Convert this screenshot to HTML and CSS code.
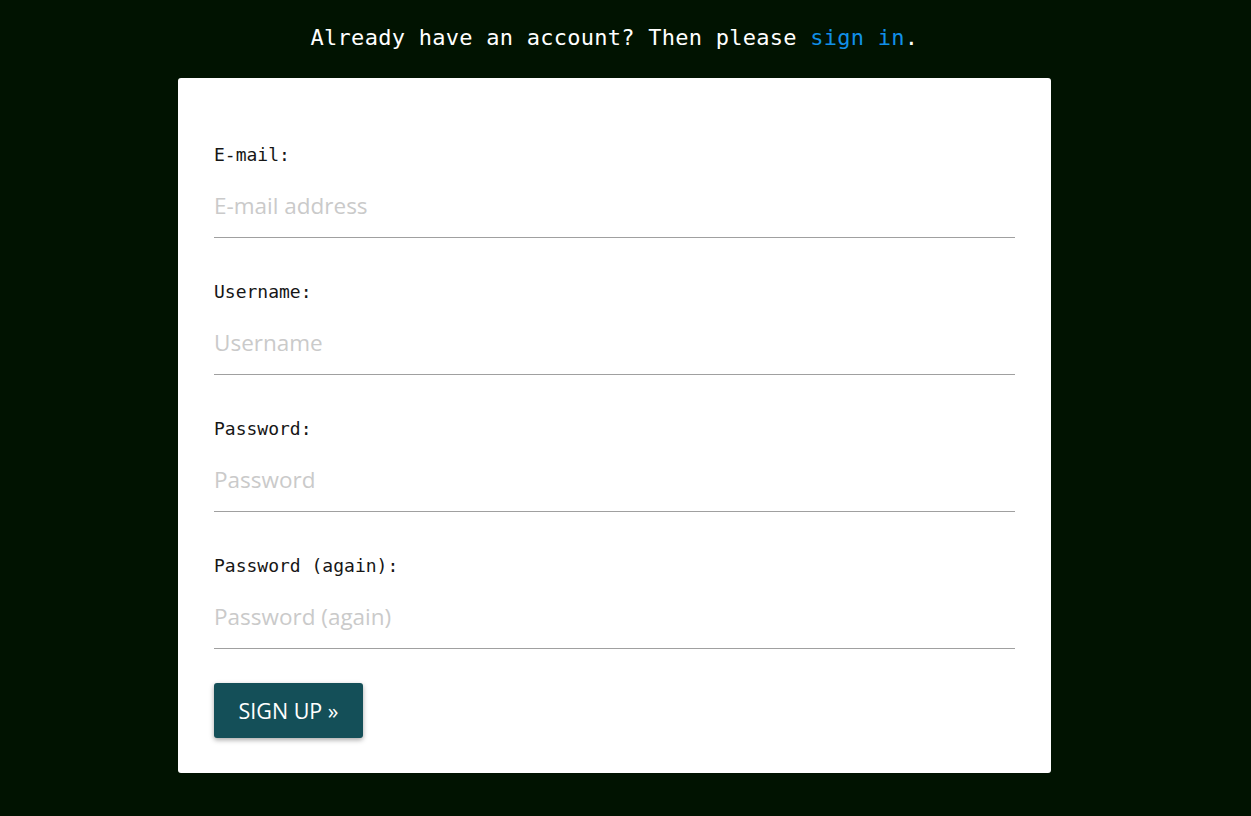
FILE: index.html
```html
<!DOCTYPE html>
<html lang="en">
<head>
<meta charset="utf-8">
<title>Sign up</title>
<link rel="stylesheet" href="styles.css">
</head>
<body>
<div class="page">
  <p class="intro">Already have an account? Then please <a href="#" class="link">sign in</a>.</p>
  <form class="card">
    <div class="field">
      <label class="label" for="email">E-mail:</label>
      <input class="input" id="email" type="email" placeholder="E-mail address">
    </div>
    <div class="field">
      <label class="label" for="username">Username:</label>
      <input class="input" id="username" type="text" placeholder="Username">
    </div>
    <div class="field">
      <label class="label" for="pw1">Password:</label>
      <input class="input" id="pw1" type="password" placeholder="Password">
    </div>
    <div class="field">
      <label class="label" for="pw2">Password (again):</label>
      <input class="input" id="pw2" type="password" placeholder="Password (again)">
    </div>
    <button class="button" type="submit">SIGN UP &raquo;</button>
  </form>
</div>
</body>
</html>
```

FILE: styles.css
```css
html, body {
  margin: 0;
  padding: 0;
  background: #011301;
  height: 100%;
}
body {
  font-family: "DejaVu Sans Mono", "Liberation Mono", monospace;
}
.page {
  width: 873px;
  margin-left: 178px;
  display: flex;
  flex-direction: column;
}
.intro {
  margin: 0;
  padding-top: 24px;
  height: 28px;
  line-height: 28px;
  margin-bottom: 26px;
  color: #ffffff;
  font-size: 22px;
  letter-spacing: 0.26px;
  text-align: center;
}
.link {
  color: #1190e8;
  text-decoration: none;
}
.card {
  background: #ffffff;
  border-radius: 3px;
  padding: 65px 36px 35px;
  display: flex;
  flex-direction: column;
  align-items: flex-start;
}
.field {
  display: flex;
  flex-direction: column;
  width: 100%;
  margin-bottom: 42px;
}
.field:nth-last-of-type(1) {
  margin-bottom: 34px;
}
.label {
  font-family: "DejaVu Sans Mono", monospace;
  font-size: 18px;
  line-height: 24px;
  height: 24px;
  color: #161616;
  margin-bottom: 11px;
}
.input {
  box-sizing: border-box;
  height: 60px;
  width: 100%;
  border: none;
  border-bottom: 1px solid #a0a0a0;
  padding: 0 0 4px;
  margin: 0;
  font-family: "Open Sans", sans-serif;
  font-size: 22.5px;
  color: #222;
  outline: none;
  background: transparent;
}
.input::placeholder {
  color: #cacaca;
}
.button {
  width: 149px;
  height: 55px;
  background: #144f58;
  color: #ffffff;
  border: none;
  border-radius: 3px;
  font-family: "Open Sans", sans-serif;
  font-size: 21.5px;
  padding: 0;
  box-shadow: 0 2px 5px rgba(0,0,0,0.35);
  cursor: pointer;
}
```
